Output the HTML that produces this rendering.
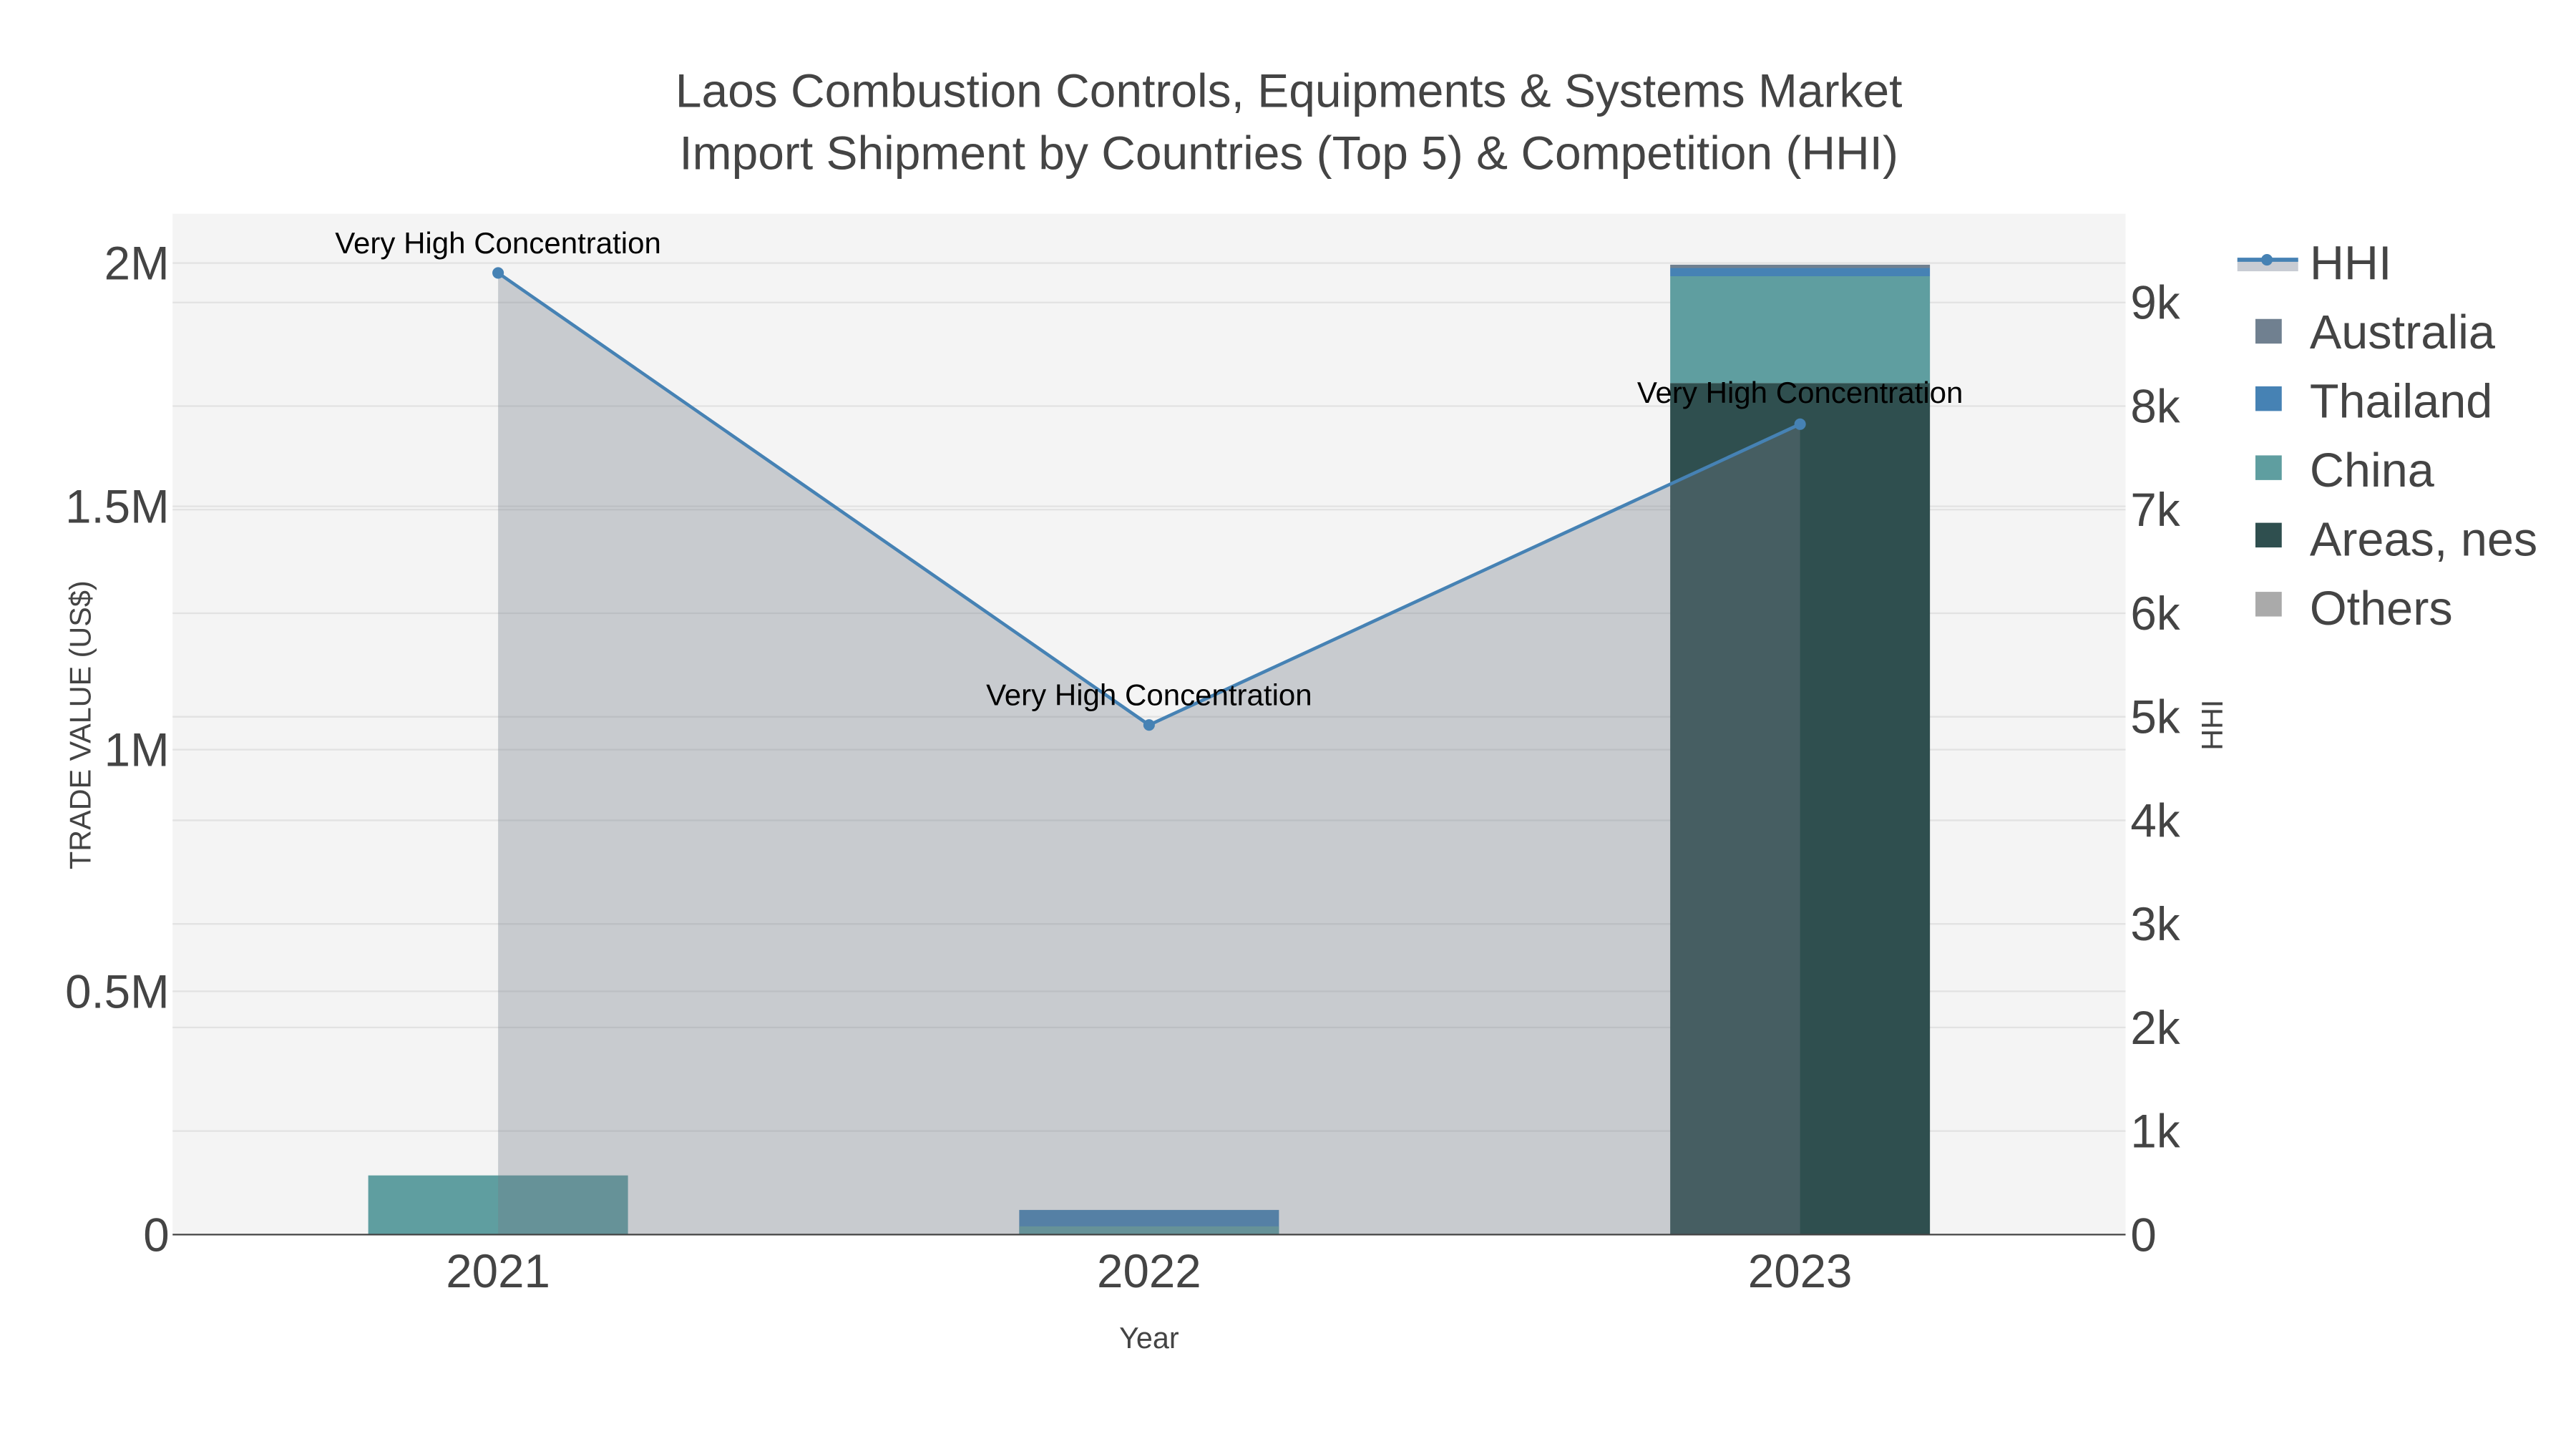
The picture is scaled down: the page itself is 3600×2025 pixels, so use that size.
<!DOCTYPE html>
<html><head><meta charset="utf-8"><style>html,body{margin:0;padding:0;background:#fff}svg{display:block}</style></head>
<body>
<svg width="3600" height="2025" viewBox="0 0 1567 881.4" xmlns="http://www.w3.org/2000/svg" font-family="Liberation Sans, sans-serif">
<rect width="1567" height="881.4" fill="#fff"/>
<rect x="105" y="130" width="1188" height="621" fill="#f4f4f4"/>
<g stroke="#e2e2e2" stroke-width="1">
<line x1="105" x2="1293" y1="603" y2="603"/><line x1="105" x2="1293" y1="456" y2="456"/><line x1="105" x2="1293" y1="308" y2="308"/><line x1="105" x2="1293" y1="160" y2="160"/>
<line x1="105" x2="1293" y1="688" y2="688"/><line x1="105" x2="1293" y1="625" y2="625"/><line x1="105" x2="1293" y1="562" y2="562"/><line x1="105" x2="1293" y1="499" y2="499"/><line x1="105" x2="1293" y1="436" y2="436"/><line x1="105" x2="1293" y1="373" y2="373"/><line x1="105" x2="1293" y1="310" y2="310"/><line x1="105" x2="1293" y1="247" y2="247"/><line x1="105" x2="1293" y1="184" y2="184"/>
</g>
<rect x="224" y="715" width="158" height="36" fill="#5f9ea0"/>
<rect x="620" y="736" width="158" height="15" fill="#4682b4"/>
<rect x="620" y="746" width="158" height="5" fill="#5f9ea0"/>
<rect x="1016" y="233" width="158" height="518" fill="#2f4f4f"/>
<rect x="1016" y="168" width="158" height="65" fill="#5f9ea0"/>
<rect x="1016" y="163" width="158" height="5" fill="#4682b4"/>
<rect x="1016" y="161" width="158" height="2" fill="#708090"/>
<polygon points="303,166 699,441 1095,258 1095,751 303,751" fill="rgb(117,125,137)" fill-opacity="0.345"/>
<polyline points="303,166 699,441 1095,258" fill="none" stroke="#4682b4" stroke-width="2"/>
<circle cx="303" cy="166" r="3.5" fill="#4682b4"/><circle cx="699" cy="441" r="3.5" fill="#4682b4"/><circle cx="1095" cy="258" r="3.5" fill="#4682b4"/>
<line x1="105" x2="1293" y1="751" y2="751" stroke="#444" stroke-width="1"/>
<g font-size="18.3" fill="#000" text-anchor="middle">
<text x="303" y="154">Very High Concentration</text>
<text x="699" y="429">Very High Concentration</text>
<text x="1095" y="245">Very High Concentration</text>
</g>
<g font-size="28.7" fill="#444" text-anchor="middle">
<text x="784" y="65">Laos Combustion Controls, Equipments &amp; Systems Market</text>
<text x="784" y="103">Import Shipment by Countries (Top 5) &amp; Competition (HHI)</text>
</g>
<g font-size="28.5" fill="#444" text-anchor="end">
<text x="103" y="761">0</text><text x="103" y="613">0.5M</text><text x="103" y="466">1M</text><text x="103" y="318">1.5M</text><text x="103" y="170">2M</text>
</g>
<g font-size="28.5" fill="#444" text-anchor="start">
<text x="1296" y="761">0</text><text x="1296" y="698">1k</text><text x="1296" y="635">2k</text><text x="1296" y="572">3k</text><text x="1296" y="509">4k</text><text x="1296" y="446">5k</text><text x="1296" y="383">6k</text><text x="1296" y="320">7k</text><text x="1296" y="257">8k</text><text x="1296" y="194">9k</text>
</g>
<g font-size="28.5" fill="#444" text-anchor="middle">
<text x="303" y="783">2021</text><text x="699" y="783">2022</text><text x="1095" y="783">2023</text>
</g>
<text x="699" y="820" font-size="18" fill="#444" text-anchor="middle">Year</text>
<text transform="translate(55,441) rotate(-90)" font-size="18" fill="#444" text-anchor="middle">TRADE VALUE (US$)</text>
<text transform="translate(1352,441) rotate(-90)" font-size="18" fill="#444" text-anchor="middle">HHI</text>
<rect x="1361" y="158" width="37" height="7" fill="#c8ccd3"/>
<line x1="1361" x2="1398" y1="158" y2="158" stroke="#4682b4" stroke-width="2.5"/>
<circle cx="1379" cy="158" r="3.5" fill="#4682b4"/>
<rect x="1372" y="194" width="16" height="15" fill="#708090"/>
<rect x="1372" y="235" width="16" height="15" fill="#4682b4"/>
<rect x="1372" y="277" width="16" height="15" fill="#5f9ea0"/>
<rect x="1372" y="318" width="16" height="15" fill="#2f4f4f"/>
<rect x="1372" y="360" width="16" height="15" fill="#aaaaaa"/>
<g font-size="29" fill="#444">
<text x="1405" y="170">HHI</text><text x="1405" y="212">Australia</text><text x="1405" y="254">Thailand</text><text x="1405" y="296">China</text><text x="1405" y="338">Areas, nes</text><text x="1405" y="380">Others</text>
</g>
</svg>
</body></html>
